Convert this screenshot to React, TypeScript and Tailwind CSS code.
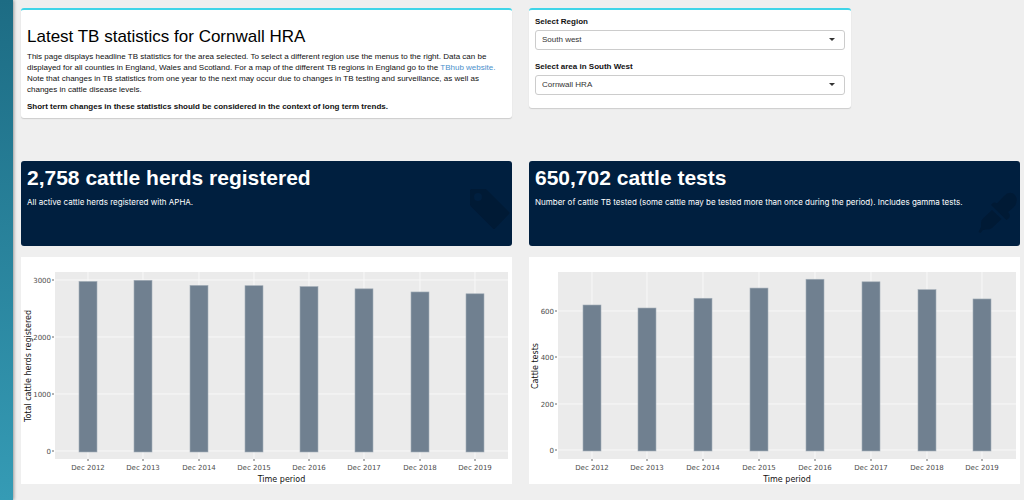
import type { ReactNode } from "react";

type Bar = { label: string; value: number };

type ChartProps = {
  title: string;
  data: Bar[];
  ticks: number[];
  // plot area, in viewBox units
  left: number;
  bottom: number;
  // y of zero and size of one data unit
  zero: number;
  unit: number;
  labelX: number;
};

const herds: Bar[] = [
  { label: "Dec 2012", value: 2975 },
  { label: "Dec 2013", value: 2995 },
  { label: "Dec 2014", value: 2905 },
  { label: "Dec 2015", value: 2900 },
  { label: "Dec 2016", value: 2885 },
  { label: "Dec 2017", value: 2845 },
  { label: "Dec 2018", value: 2790 },
  { label: "Dec 2019", value: 2758 },
];

const tests: Bar[] = [
  { label: "Dec 2012", value: 625 },
  { label: "Dec 2013", value: 612 },
  { label: "Dec 2014", value: 654 },
  { label: "Dec 2015", value: 698 },
  { label: "Dec 2016", value: 736 },
  { label: "Dec 2017", value: 725 },
  { label: "Dec 2018", value: 691 },
  { label: "Dec 2019", value: 651 },
];

function BarChart({ title, data, ticks, left, bottom, zero, unit, labelX }: ChartProps) {
  const right = 487;
  const top = 15;
  const step = (right - left) / (data.length + 0.2);
  const center = (i: number) => Math.round(left + step * (i + 0.6));

  return (
    <div className="bg-white">
      <svg viewBox="0 0 491 227" className="block w-full font-['DejaVu_Sans',sans-serif]" role="img" aria-label={title}>
        <rect x={left} y={top} width={right - left} height={bottom - top} fill="#ebebeb" />
        {ticks.map((t) => {
          const y = Math.round(zero - t * unit);
          return (
            <g key={t}>
              <line x1={left} x2={right} y1={y} y2={y} stroke="#f8f8f8" />
              <line x1={left - 3} x2={left - 1} y1={y} y2={y} stroke="#666" />
              <text x={left - 4} y={y + 3} textAnchor="end" fontSize="7" fill="#4d4d4d">
                {t}
              </text>
            </g>
          );
        })}
        {data.map((d, i) => {
          const x = center(i);
          const h = d.value * unit;
          return (
            <g key={d.label}>
              <line x1={x} x2={x} y1={top} y2={bottom} stroke="#f8f8f8" />
              <line x1={x} x2={x} y1={bottom} y2={bottom + 2} stroke="#666" />
              <rect x={x - 9} y={zero - h} width="18" height={h + 1} fill="#708090" stroke="#a3adb7" strokeWidth="0.6" />
              <text x={x} y={bottom + 11} textAnchor="middle" fontSize="7" fill="#4d4d4d">
                {d.label}
              </text>
            </g>
          );
        })}
        <text x={(left + right) / 2} y="225" textAnchor="middle" fontSize="8" fill="#111">
          Time period
        </text>
        <text transform={`translate(${labelX} 109) rotate(-90)`} textAnchor="middle" fontSize="8" fill="#111">
          {title}
        </text>
      </svg>
    </div>
  );
}

function StatBox({ value, note, icon }: { value: string; note: string; icon: ReactNode }) {
  return (
    <section className="relative h-[85px] overflow-hidden rounded-[3px] bg-[#001f3f] px-1.5 pt-[5px] text-white">
      <h2 className="text-[21px] leading-6 font-bold">{value}</h2>
      <p className="mt-1 font-[Inter,sans-serif] text-[8px] leading-4">{note}</p>
      <div className="absolute top-7 right-0.5 text-[#001a35]">{icon}</div>
    </section>
  );
}

function TagIcon() {
  return (
    <svg viewBox="0 0 40 42" className="h-[42px] w-10" fill="currentColor" aria-hidden="true">
      <path
        fillRule="evenodd"
        d="M0 1.500Q0 0 1.500 0H15.500L17 1L39 23Q40 24 39 25L25 39.500Q24 40.500 23 39.500L0.500 17L0 15.500ZM8 4a4 4 0 1 0 0 8a4 4 0 1 0 0-8Z"
      />
    </svg>
  );
}

function DropperIcon() {
  return (
    <svg viewBox="0 0 40 44" className="h-11 w-10" fill="currentColor" aria-hidden="true">
      <path d="M13 16Q16 12 19 14.500L26 7Q32 1 37 6Q41 12 36 18L30 23Q33 26 31 29L28.500 31Z" />
      <path d="M14 21L23.500 30L14 39Q12 40.500 8 40.500L5 41L2.500 44L0.500 43L3 38L3 34Q3 31 5 29.500Z" />
    </svg>
  );
}

function RegionSelect({ id, label, value }: { id: string; label: string; value: string }) {
  return (
    <div>
      <label htmlFor={id} className="block text-[8px] leading-3 font-bold">
        {label}
      </label>
      <div className="relative mt-0.5">
        <select
          id={id}
          defaultValue={value}
          className="block h-5 w-full appearance-none rounded-[3px] border border-[#ccc] bg-white px-1.5 text-[8px] text-[#333]"
        >
          <option>{value}</option>
        </select>
        <svg viewBox="0 0 6 3" className="pointer-events-none absolute top-2 right-2.5 h-[3px] w-1.5" aria-hidden="true">
          <path d="M0 0H6L3 3Z" fill="#333" />
        </svg>
      </div>
    </div>
  );
}

export default function App() {
  return (
    <div className="flex min-h-screen bg-[#efefef] font-['Liberation_Sans',Arial,sans-serif] text-[#111]">
      <aside className="w-[13px] shrink-0 bg-linear-to-b from-[#1d6c84] to-[#359bb5] shadow-[1px_0_3px_#999]" />
      <main className="min-w-0 flex-1 pt-2 pr-1 pl-2">
        <div className="grid min-h-[153px] grid-cols-2 items-start gap-x-[17px]">
          <section className="rounded-[3px] border-t-2 border-[#3fd5e8] bg-white px-1.5 pt-[17px] pb-1.5 shadow-[0_1px_1px_#ccc]">
            <h1 className="text-[17px] leading-5 text-black">Latest TB statistics for Cornwall HRA</h1>
            <p className="mt-1 pr-1.5 text-[8px] leading-[11px]">
              This page displays headline TB statistics for the area selected. To select a different region use the
              menus to the right. Data can be displayed for all counties in England, Wales and Scotland. For a map of
              the different TB regions in England go to the{" "}
              <a href="#" className="text-[#4a90cc]">
                TBhub website.
              </a>{" "}
              Note that changes in TB statistics from one year to the next may occur due to changes in TB testing and
              surveillance, as well as changes in cattle disease levels.
            </p>
            <p className="mt-1.5 text-[8px] leading-[11px] font-bold">
              Short term changes in these statistics should be considered in the context of long term trends.
            </p>
          </section>
          <section className="mr-[169px] flex flex-col gap-[11px] rounded-[3px] border-t-2 border-[#3fd5e8] bg-white px-1.5 pt-1.5 pb-[13px] shadow-[0_1px_1px_#ccc]">
            <RegionSelect id="region" label="Select Region" value="South west" />
            <RegionSelect id="area" label="Select area in South West" value="Cornwall HRA" />
          </section>
        </div>
        <div className="grid grid-cols-2 gap-x-[17px] gap-y-[11px]">
          <StatBox
            value="2,758 cattle herds registered"
            note="All active cattle herds registered with APHA."
            icon={<TagIcon />}
          />
          <StatBox
            value="650,702 cattle tests"
            note="Number of cattle TB tested (some cattle may be tested more than once during the period). Includes gamma tests."
            icon={<DropperIcon />}
          />
          <BarChart
            title="Total cattle herds registered"
            data={herds}
            ticks={[0, 1000, 2000, 3000]}
            left={34}
            bottom={202}
            zero={194}
            unit={0.057}
            labelX={10}
          />
          <BarChart
            title="Cattle tests"
            data={tests}
            ticks={[0, 200, 400, 600]}
            left={29}
            bottom={202}
            zero={193}
            unit={0.232}
            labelX={9}
          />
        </div>
      </main>
    </div>
  );
}
